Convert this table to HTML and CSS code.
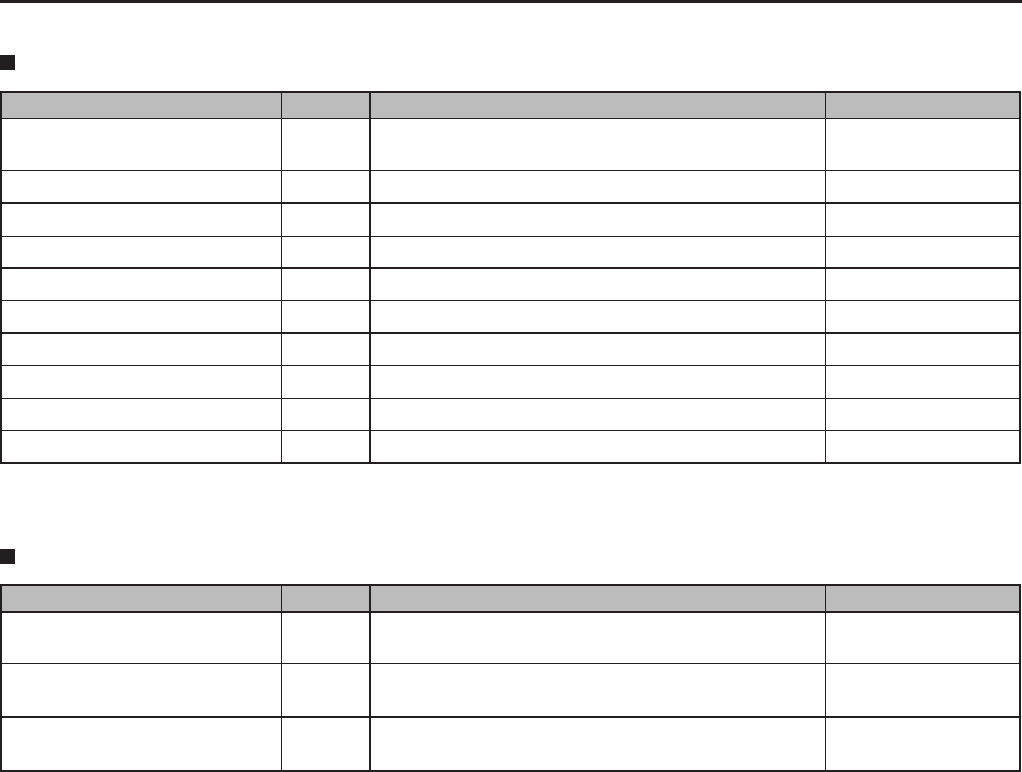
FILE: index.html
```html
<!DOCTYPE html>
<html lang="en">
<head>
<meta charset="utf-8">
<title>Tables</title>
<link rel="stylesheet" href="styles.css">
</head>
<body>
<div class="top-rule"></div>

<section class="section section-first">
  <div class="marker"></div>
  <div class="table">
    <div class="row head h26"><div class="cell"></div><div class="cell"></div><div class="cell"></div><div class="cell"></div></div>
    <div class="row h52"><div class="cell"></div><div class="cell"></div><div class="cell"></div><div class="cell"></div></div>
    <div class="row h33 thick"><div class="cell"></div><div class="cell"></div><div class="cell"></div><div class="cell"></div></div>
    <div class="row h33"><div class="cell"></div><div class="cell"></div><div class="cell"></div><div class="cell"></div></div>
    <div class="row h32 thick"><div class="cell"></div><div class="cell"></div><div class="cell"></div><div class="cell"></div></div>
    <div class="row h32"><div class="cell"></div><div class="cell"></div><div class="cell"></div><div class="cell"></div></div>
    <div class="row h33 thick"><div class="cell"></div><div class="cell"></div><div class="cell"></div><div class="cell"></div></div>
    <div class="row h32"><div class="cell"></div><div class="cell"></div><div class="cell"></div><div class="cell"></div></div>
    <div class="row h33"><div class="cell"></div><div class="cell"></div><div class="cell"></div><div class="cell"></div></div>
    <div class="row h32"><div class="cell"></div><div class="cell"></div><div class="cell"></div><div class="cell"></div></div>
    <div class="row h31"><div class="cell"></div><div class="cell"></div><div class="cell"></div><div class="cell"></div></div>
  </div>
</section>

<section class="section section-second">
  <div class="marker"></div>
  <div class="table">
    <div class="row head h27 thick"><div class="cell"></div><div class="cell"></div><div class="cell"></div><div class="cell"></div></div>
    <div class="row h51"><div class="cell"></div><div class="cell"></div><div class="cell"></div><div class="cell"></div></div>
    <div class="row h54 thick"><div class="cell"></div><div class="cell"></div><div class="cell"></div><div class="cell"></div></div>
    <div class="row h52"><div class="cell"></div><div class="cell"></div><div class="cell"></div><div class="cell"></div></div>
  </div>
</section>
</body>
</html>
```

FILE: styles.css
```css
html, body {
  margin: 0;
  padding: 0;
  background: #ffffff;
  font-family: "Liberation Sans", Arial, sans-serif;
}

.top-rule {
  height: 3px;
  width: 1022px;
  background: #231f20;
}

.section {
  display: flex;
  flex-direction: column;
}

.section-first {
  padding-top: 52px;
}

.section-first .marker {
  margin-bottom: 21px;
}

.section-second {
  padding-top: 85px;
}

.section-second .marker {
  margin-bottom: 20px;
}

.marker {
  width: 15px;
  height: 15px;
  background: #231f20;
}

.table {
  width: 1021px;
  box-sizing: border-box;
  border: 2px solid #231f20;
  display: flex;
  flex-direction: column;
}

.row {
  display: grid;
  grid-template-columns: 280px 89px 455px 193px;
  box-sizing: border-box;
  border-bottom: 1px solid #231f20;
}

.row.thick {
  border-bottom-width: 2px;
}

.row:last-child {
  border-bottom: none;
}

.row.head {
  background: #bcbcbc;
}

.cell {
  box-sizing: border-box;
  border-right: 1px solid #231f20;
}

.cell:nth-child(2) {
  border-right-width: 2px;
}

.cell:last-child {
  border-right: none;
}

.h26 { height: 26px; }
.h27 { height: 27px; }
.h31 { height: 31px; }
.h32 { height: 32px; }
.h33 { height: 33px; }
.h51 { height: 51px; }
.h52 { height: 52px; }
.h54 { height: 54px; }
```
